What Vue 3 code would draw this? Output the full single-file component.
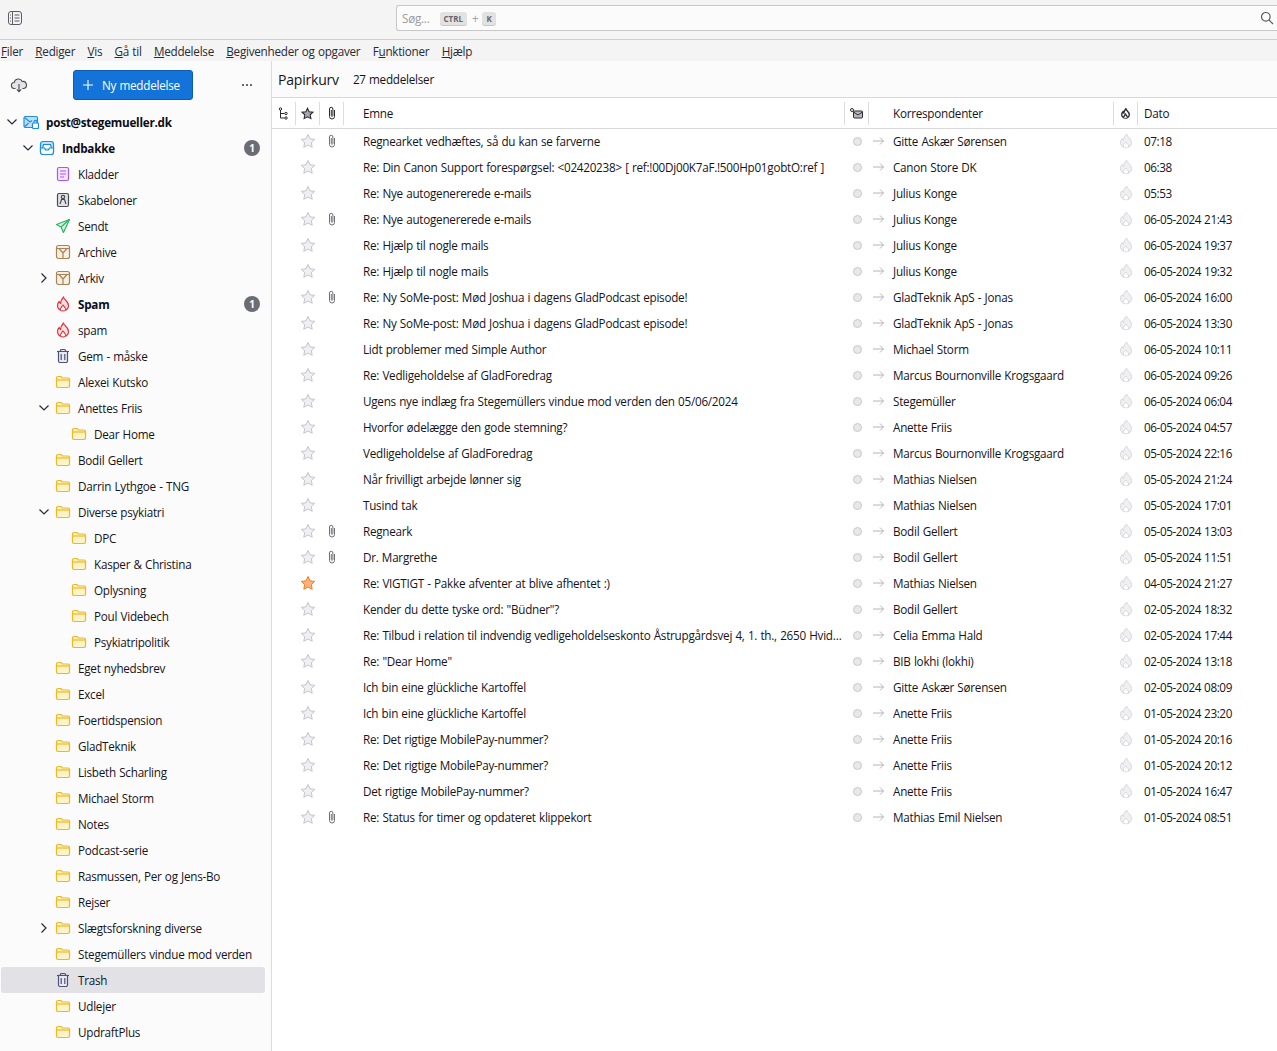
<template>
  <div class="app">
    <div class="toolbar">
      <svg class="pane-btn" width="16" height="16" viewBox="0 0 16 16" fill="none" stroke="#5b5b66" stroke-width="1">
        <rect x="1.5" y="1.5" width="13" height="13" rx="2.5" />
        <path d="M5.5 2v12M3 5h1M3 8h1M3 11h1M7.5 5h5M7.5 8h5M7.5 11h5" />
      </svg>
      <div class="search">
        <span class="search-ph">Søg...</span>
        <span class="kbd">CTRL</span>
        <span class="plus">+</span>
        <span class="kbd">K</span>
        <svg class="search-icon" width="14" height="14" viewBox="0 0 14 14" fill="none" stroke="#5b5b66" stroke-width="1.2">
          <circle cx="5.8" cy="5.8" r="4.3" />
          <path d="M9 9l4 4" />
        </svg>
      </div>
    </div>

    <div class="menubar">
      <span v-for="m in menus" :key="m.label" class="menu-item">{{ m.before }}<u>{{ m.key }}</u>{{ m.after }}</span>
    </div>

    <div class="main">
      <aside class="sidebar">
        <div class="side-head">
          <svg width="18" height="18" viewBox="0 0 18 18" fill="none" stroke="#4a4a4f" stroke-width="1.1">
            <path d="M5.5 12.500H4.600a3 3 0 0 1-.4-6 4.200 4.200 0 0 1 8-1 3.400 3.400 0 0 1 1.400 7h-1.200" fill="#e4e4e8" />
            <path d="M9 8v7.500M6.800 13.400L9 15.600l2.200-2.200" />
          </svg>
          <button class="compose">
            <svg width="10" height="10" viewBox="0 0 10 10" stroke="#fff" stroke-width="1.1"><path d="M5 0v10M0 5h10" /></svg>
            <span>Ny meddelelse</span>
          </button>
          <span class="dots"><i></i><i></i><i></i></span>
        </div>

        <div
          v-for="f in folders"
          :key="f.name + f.level"
          class="folder"
          :class="{ selected: f.selected, bold: f.bold }"
          :style="{ paddingLeft: (f.level * 16 + 5) + 'px' }"
        >
          <span class="twisty">
            <svg v-if="f.open !== undefined" width="12" height="12" viewBox="0 0 12 12" fill="none" stroke="#2b2a33" stroke-width="1.2">
              <path v-if="f.open" d="M1.500 3.500L6 8l4.500-4.500" />
              <path v-else d="M3.500 1.500L8 6l-4.500 4.500" />
            </svg>
          </span>

          <svg class="ficon" width="16" height="16" viewBox="0 0 16 16" fill="none" stroke-width="1.2">
            <template v-if="f.icon === 'folder'">
              <path d="M1.500 4a1.500 1.500 0 0 1 1.500-1.500h3l1.500 1.500H13a1.500 1.500 0 0 1 1.500 1.500V12a1.500 1.500 0 0 1-1.500 1.500H3A1.500 1.500 0 0 1 1.500 12z" fill="#fdf3c9" stroke="#eeb91f" />
              <path d="M1.500 6h13" stroke="#eeb91f" />
            </template>
            <template v-else-if="f.icon === 'account'">
              <rect x="1" y="2.500" width="13.500" height="11" rx="1.500" fill="#bfe0fb" stroke="#1b8ee8" />
              <path d="M1.500 3.500L7 8l2-1.500M1.500 13l4-4" stroke="#1b8ee8" />
              <rect x="9.500" y="9" width="6" height="5.500" rx="1" fill="#fff" stroke="#1b8ee8" />
              <path d="M11 9V7.800a1.500 1.500 0 0 1 3 0V9" stroke="#1b8ee8" />
            </template>
            <template v-else-if="f.icon === 'inbox'">
              <rect x="1.500" y="1.500" width="13" height="13" rx="2.500" fill="#bfe0fb" stroke="#1b8ee8" />
              <path d="M3.500 8l1-3.500h7l1 3.500" stroke="#1b8ee8" fill="#fff" />
              <path d="M1.500 8h4l1 2h3l1-2h4v4a2.500 2.500 0 0 1-2.500 2.500H4A2.500 2.500 0 0 1 1.500 12z" stroke="#1b8ee8" fill="#fff" />
            </template>
            <template v-else-if="f.icon === 'draft'">
              <rect x="2.500" y="1.500" width="11" height="13" rx="1.500" fill="#f3e6fe" stroke="#a855f7" />
              <path d="M5 5h6M5 8h6M5 11h4" stroke="#a855f7" />
            </template>
            <template v-else-if="f.icon === 'template'">
              <rect x="2.500" y="1.500" width="11" height="13" rx="1.500" fill="#e2e2e6" stroke="#4a4a52" />
              <circle cx="8" cy="5" r="1.700" stroke="#4a4a52" />
              <path d="M5 12l1.500-4.500h3L11 12" stroke="#4a4a52" />
            </template>
            <template v-else-if="f.icon === 'sent'">
              <path d="M14.500 1.500L1.500 6.500l4.500 2.500 2.500 5.500z" fill="#d8f5e2" stroke="#2cb163" stroke-linejoin="round" />
              <path d="M14.500 1.500L6 9" stroke="#2cb163" />
            </template>
            <template v-else-if="f.icon === 'archive'">
              <rect x="1.500" y="1.500" width="13" height="13" rx="2" fill="#f6eee0" stroke="#a78458" />
              <path d="M1.500 4.500h13M4 4.500L8 9l4-4.500M8 9v5.500" stroke="#a78458" />
            </template>
            <template v-else-if="f.icon === 'junk'">
              <path :d="flamePath" fill="#fde0e2" stroke="#e5303b" stroke-linejoin="round" />
              <path :d="flameInner" stroke="#e5303b" fill="#fff" />
            </template>
            <template v-else>
              <path d="M2 3.500h12" stroke="#51517a" />
              <path d="M3.500 3.500h9v9.500a1.500 1.500 0 0 1-1.500 1.500H5a1.500 1.500 0 0 1-1.500-1.500z" fill="#e8e8f0" stroke="#51517a" />
              <path d="M5.500 3.500V2.500a1 1 0 0 1 1-1h3a1 1 0 0 1 1 1v1M6.200 6v6M9.800 6v6" stroke="#51517a" />
            </template>
          </svg>

          <span class="fname">{{ f.name }}</span>
          <span v-if="f.badge" class="badge">{{ f.badge }}</span>
        </div>
      </aside>

      <section class="content">
        <div class="msg-head">
          <span class="msg-folder">Papirkurv</span>
          <span class="msg-count">27 meddelelser</span>
        </div>

        <div class="row cols-head">
          <span class="hc sep">
            <svg width="12" height="13" viewBox="0 0 12 13" fill="none" stroke="#2b2a33"><path d="M2.500 3v8h4M2.500 6.500h4" /><circle cx="2.500" cy="2" r="1.200" /><circle cx="8" cy="6.500" r="1.200" /><circle cx="8" cy="11" r="1.200" /></svg>
          </span>
          <span class="hc sep">
            <svg width="13" height="13" viewBox="0 0 16 16" fill="#a8a8ae" stroke="#2b2a33" stroke-width="1.300"><path :d="starPath" /></svg>
          </span>
          <span class="hc sep">
            <svg width="10" height="14" viewBox="0 0 10 14" fill="none" stroke="#2b2a33"><path :d="clipPath" /></svg>
          </span>
          <span class="subject hc-text sep-end">Emne</span>
          <span class="hc sep">
            <svg width="13" height="11" viewBox="0 0 13 11" fill="#b8b8be" stroke="#2b2a33"><rect x="3.500" y="3" width="9" height="7" rx="1" /><path d="M3.500 4l4.500 3 4.500-3" fill="none" /><circle cx="2" cy="2" r="1.500" fill="none" /></svg>
          </span>
          <span class="corr hc-text sep-end">Korrespondenter</span>
          <span class="hc sep">
            <svg width="11" height="11" viewBox="0 0 16 16" fill="#fff" stroke="#2b2a33" stroke-width="2"><path :d="flamePath" /><path :d="flameInner" /></svg>
          </span>
          <span class="date hc-text">Dato</span>
        </div>

        <div class="msg-list">
          <div v-for="(m, i) in messages" :key="i" class="row msg">
            <span class="cell"></span>
            <span class="cell">
              <svg width="16" height="16" viewBox="0 0 16 16" :fill="m.star ? '#ffb27a' : '#f0f0f4'" :stroke="m.star ? '#f07c28' : '#c4c4ca'"><path :d="starPath" /></svg>
            </span>
            <span class="cell">
              <svg v-if="m.clip" width="10" height="14" viewBox="0 0 10 14" fill="none" stroke="#6f6f78"><path :d="clipPath" /></svg>
            </span>
            <span class="subject text">{{ m.subject }}</span>
            <span class="cell">
              <span class="dot"></span>
            </span>
            <span class="corr text with-arrow">
              <svg class="arrow" width="11" height="10" viewBox="0 0 11 10" fill="none" stroke="#b4b4ba"><path d="M0 5h10.500M7 1.500L10.500 5 7 8.500" /></svg>
              {{ m.from }}
            </span>
            <span class="cell">
              <svg width="16" height="16" viewBox="0 0 16 16" fill="#f0f0f3" stroke="#d8d8dd"><path :d="flamePath" /><path :d="flameInner" fill="#fff" /></svg>
            </span>
            <span class="date text">{{ m.date }}</span>
          </div>
        </div>
      </section>
    </div>
  </div>
</template>

<script setup>
const starPath = 'M8 1.500l2 4.300 4.700.6-3.400 3.200.9 4.700L8 12l-4.200 2.300.9-4.700L1.300 6.400 6 5.800z'
const clipPath = 'M7.500 4v6.500a2.500 2.500 0 0 1-5 0V3a1.700 1.700 0 0 1 3.400 0v6.500a.8.8 0 0 1-1.600 0V4'
const flamePath = 'M8.500 1c.4 2.800 5 4.400 5 8.400A5.300 5.300 0 0 1 8 14.800 5.300 5.300 0 0 1 2.500 9.400c0-1.700.8-3 1.700-3.900.2 1 .7 1.700 1.400 2C5.500 5 7 2.800 8.500 1z'
const flameInner = 'M5.500 14.300c-.8-2.100.9-3.300 2.500-5.300 1.600 2 3.300 3.200 2.500 5.300'

const menus = [
  { label: 'Filer', before: '', key: 'F', after: 'iler' },
  { label: 'Rediger', before: '', key: 'R', after: 'ediger' },
  { label: 'Vis', before: '', key: 'V', after: 'is' },
  { label: 'Gå til', before: '', key: 'G', after: 'å til' },
  { label: 'Meddelelse', before: '', key: 'M', after: 'eddelelse' },
  { label: 'Begivenheder', before: '', key: 'B', after: 'egivenheder og opgaver' },
  { label: 'Funktioner', before: 'F', key: 'u', after: 'nktioner' },
  { label: 'Hjælp', before: '', key: 'H', after: 'jælp' }
]

const folders = [
  { name: 'post@stegemueller.dk', level: 0, icon: 'account', open: true, bold: true },
  { name: 'Indbakke', level: 1, icon: 'inbox', open: true, bold: true, badge: 1 },
  { name: 'Kladder', level: 2, icon: 'draft' },
  { name: 'Skabeloner', level: 2, icon: 'template' },
  { name: 'Sendt', level: 2, icon: 'sent' },
  { name: 'Archive', level: 2, icon: 'archive' },
  { name: 'Arkiv', level: 2, icon: 'archive', open: false },
  { name: 'Spam', level: 2, icon: 'junk', bold: true, badge: 1 },
  { name: 'spam', level: 2, icon: 'junk' },
  { name: 'Gem - måske', level: 2, icon: 'trash' },
  { name: 'Alexei Kutsko', level: 2, icon: 'folder' },
  { name: 'Anettes Friis', level: 2, icon: 'folder', open: true },
  { name: 'Dear Home', level: 3, icon: 'folder' },
  { name: 'Bodil Gellert', level: 2, icon: 'folder' },
  { name: 'Darrin Lythgoe - TNG', level: 2, icon: 'folder' },
  { name: 'Diverse psykiatri', level: 2, icon: 'folder', open: true },
  { name: 'DPC', level: 3, icon: 'folder' },
  { name: 'Kasper & Christina', level: 3, icon: 'folder' },
  { name: 'Oplysning', level: 3, icon: 'folder' },
  { name: 'Poul Videbech', level: 3, icon: 'folder' },
  { name: 'Psykiatripolitik', level: 3, icon: 'folder' },
  { name: 'Eget nyhedsbrev', level: 2, icon: 'folder' },
  { name: 'Excel', level: 2, icon: 'folder' },
  { name: 'Foertidspension', level: 2, icon: 'folder' },
  { name: 'GladTeknik', level: 2, icon: 'folder' },
  { name: 'Lisbeth Scharling', level: 2, icon: 'folder' },
  { name: 'Michael Storm', level: 2, icon: 'folder' },
  { name: 'Notes', level: 2, icon: 'folder' },
  { name: 'Podcast-serie', level: 2, icon: 'folder' },
  { name: 'Rasmussen, Per og Jens-Bo', level: 2, icon: 'folder' },
  { name: 'Rejser', level: 2, icon: 'folder' },
  { name: 'Slægtsforskning diverse', level: 2, icon: 'folder', open: false },
  { name: 'Stegemüllers vindue mod verden', level: 2, icon: 'folder' },
  { name: 'Trash', level: 2, icon: 'trash', selected: true },
  { name: 'Udlejer', level: 2, icon: 'folder' },
  { name: 'UpdraftPlus', level: 2, icon: 'folder' }
]

const messages = [
  { subject: 'Regnearket vedhæftes, så du kan se farverne', from: 'Gitte Askær Sørensen', date: '07:18', clip: true },
  { subject: 'Re: Din Canon Support forespørgsel: <02420238> [ ref:!00Dj00K7aF.!500Hp01gobtO:ref ]', from: 'Canon Store DK', date: '06:38' },
  { subject: 'Re: Nye autogenererede e-mails', from: 'Julius Konge', date: '05:53' },
  { subject: 'Re: Nye autogenererede e-mails', from: 'Julius Konge', date: '06-05-2024 21:43', clip: true },
  { subject: 'Re: Hjælp til nogle mails', from: 'Julius Konge', date: '06-05-2024 19:37' },
  { subject: 'Re: Hjælp til nogle mails', from: 'Julius Konge', date: '06-05-2024 19:32' },
  { subject: 'Re: Ny SoMe-post: Mød Joshua i dagens GladPodcast episode!', from: 'GladTeknik ApS - Jonas', date: '06-05-2024 16:00', clip: true },
  { subject: 'Re: Ny SoMe-post: Mød Joshua i dagens GladPodcast episode!', from: 'GladTeknik ApS - Jonas', date: '06-05-2024 13:30' },
  { subject: 'Lidt problemer med Simple Author', from: 'Michael Storm', date: '06-05-2024 10:11' },
  { subject: 'Re: Vedligeholdelse af GladForedrag', from: 'Marcus Bournonville Krogsgaard', date: '06-05-2024 09:26' },
  { subject: 'Ugens nye indlæg fra Stegemüllers vindue mod verden den 05/06/2024', from: 'Stegemüller', date: '06-05-2024 06:04' },
  { subject: 'Hvorfor ødelægge den gode stemning?', from: 'Anette Friis', date: '06-05-2024 04:57' },
  { subject: 'Vedligeholdelse af GladForedrag', from: 'Marcus Bournonville Krogsgaard', date: '05-05-2024 22:16' },
  { subject: 'Når frivilligt arbejde lønner sig', from: 'Mathias Nielsen', date: '05-05-2024 21:24' },
  { subject: 'Tusind tak', from: 'Mathias Nielsen', date: '05-05-2024 17:01' },
  { subject: 'Regneark', from: 'Bodil Gellert', date: '05-05-2024 13:03', clip: true },
  { subject: 'Dr. Margrethe', from: 'Bodil Gellert', date: '05-05-2024 11:51', clip: true },
  { subject: 'Re: VIGTIGT - Pakke afventer at blive afhentet :)', from: 'Mathias Nielsen', date: '04-05-2024 21:27', star: true },
  { subject: 'Kender du dette tyske ord: "Büdner"?', from: 'Bodil Gellert', date: '02-05-2024 18:32' },
  { subject: 'Re: Tilbud i relation til indvendig vedligeholdelseskonto Åstrupgårdsvej 4, 1. th., 2650 Hvidovre', from: 'Celia Emma Hald', date: '02-05-2024 17:44' },
  { subject: 'Re: "Dear Home"', from: 'BIB lokhi (lokhi)', date: '02-05-2024 13:18' },
  { subject: 'Ich bin eine glückliche Kartoffel', from: 'Gitte Askær Sørensen', date: '02-05-2024 08:09' },
  { subject: 'Ich bin eine glückliche Kartoffel', from: 'Anette Friis', date: '01-05-2024 23:20' },
  { subject: 'Re: Det rigtige MobilePay-nummer?', from: 'Anette Friis', date: '01-05-2024 20:16' },
  { subject: 'Re: Det rigtige MobilePay-nummer?', from: 'Anette Friis', date: '01-05-2024 20:12' },
  { subject: 'Det rigtige MobilePay-nummer?', from: 'Anette Friis', date: '01-05-2024 16:47' },
  { subject: 'Re: Status for timer og opdateret klippekort', from: 'Mathias Emil Nielsen', date: '01-05-2024 08:51', clip: true }
]
</script>

<style>
html, body {
  margin: 0;
  overflow: hidden;
}
</style>

<style scoped>
.app {
  width: 1277px;
  height: 1051px;
  overflow: hidden;
  display: flex;
  flex-direction: column;
  font-family: "Open Sans", "Noto Sans", sans-serif;
  font-size: 11.7px;
  letter-spacing: -0.25px;
  word-spacing: 0.5px;
  color: #15141a;
  background: #fff;
}

.toolbar {
  height: 40px;
  box-sizing: border-box;
  background: #f4f4f4;
  border-bottom: 1px solid #cfcfcf;
  display: flex;
  align-items: center;
  padding: 0 0 3px 7px;
}

.pane-btn {
  flex: none;
}

.search {
  margin-left: 373px;
  flex: 1;
  height: 26px;
  box-sizing: border-box;
  background: #fbfbfb;
  border: 1px solid #c8c8c8;
  border-right: 0;
  border-radius: 3px 0 0 3px;
  display: flex;
  align-items: center;
  padding-left: 5px;
  position: relative;
}

.search-ph {
  color: #9a9aa0;
  margin-right: 10px;
}

.kbd {
  background: #e2e2e2;
  color: #66666c;
  font-size: 8px;
  font-weight: 700;
  letter-spacing: 0;
  border-radius: 3px;
  padding: 1px 4px;
  box-shadow: 0 1px 0 #c8c8c8;
}

.plus {
  color: #a0a0a6;
  margin: 0 4px 0 5px;
}

.search-icon {
  position: absolute;
  right: 3px;
  top: 5px;
}

.menubar {
  height: 21px;
  box-sizing: border-box;
  flex: none;
  background: #f4f4f4;
  display: flex;
  align-items: center;
  gap: 12.3px;
  padding: 1px 0 0 1px;
  color: #2b2a33;
}

.main {
  flex: 1;
  display: flex;
  min-height: 0;
}

.sidebar {
  width: 272px;
  flex: none;
  box-sizing: border-box;
  background: #fbfbfb;
  border-right: 1px solid #dcdcdc;
  overflow: hidden;
}

.side-head {
  height: 48px;
  display: flex;
  align-items: center;
  padding: 0 19px 0 10px;
  box-sizing: border-box;
}

.compose {
  margin-left: 45px;
  width: 120px;
  height: 30px;
  background: #1373d9;
  border: 1px solid #0c5cb0;
  border-radius: 3px;
  color: #fff;
  font: inherit;
  letter-spacing: inherit;
  word-spacing: inherit;
  display: flex;
  align-items: center;
  padding: 0 0 0 9px;
  gap: 9px;
}

.dots {
  margin-left: auto;
  display: flex;
  gap: 2px;
}

.dots i {
  width: 2px;
  height: 2px;
  background: #3a3a42;
  border-radius: 50%;
}

.folder {
  height: 26px;
  display: flex;
  align-items: center;
  margin-right: 6px;
  margin-left: 1px;
  box-sizing: border-box;
  border-radius: 3px;
  position: relative;
  white-space: nowrap;
}

.folder.selected {
  background: #e2e2e6;
}

.folder.bold .fname {
  font-weight: 700;
  color: #0c0c14;
}

.twisty {
  width: 17px;
  display: flex;
  flex: none;
}

.ficon {
  flex: none;
}

.fname {
  margin-left: 7px;
}

.badge {
  position: absolute;
  right: 5px;
  width: 16px;
  height: 16px;
  border-radius: 50%;
  background: #6c6c75;
  color: #fff;
  font-size: 10px;
  font-weight: 700;
  display: flex;
  align-items: center;
  justify-content: center;
}

.content {
  flex: 1;
  min-width: 0;
}

.msg-head {
  height: 37px;
  box-sizing: border-box;
  border-bottom: 1px solid #d8d8d8;
  background: #fbfbfb;
  display: flex;
  align-items: center;
  padding: 0 0 0 6px;
  gap: 14px;
}

.msg-folder {
  font-size: 14px;
  letter-spacing: -0.2px;
  font-weight: 500;
}

.row {
  display: grid;
  grid-template-columns: 24px 24px 24px 501px 24px 245px 24px 1fr;
  align-items: center;
  height: 26px;
}

.cols-head {
  height: 31px;
  border-bottom: 1px solid #d8d8d8;
  box-sizing: border-box;
}

.msg-list {
  margin-top: -1px;
}

.hc {
  display: flex;
  align-items: center;
  justify-content: center;
  height: 23px;
  border-right: 1px solid #dcdcdc;
}

.hc-text {
  padding-left: 19px;
  box-sizing: border-box;
  height: 23px;
  display: flex;
  align-items: center;
}

.sep-end {
  border-right: 1px solid #dcdcdc;
}

.cols-head .corr {
  padding-left: 24px;
}

.cols-head .date {
  padding-left: 6px;
}

.cell {
  display: flex;
  align-items: center;
  justify-content: center;
}

.text {
  white-space: nowrap;
  overflow: hidden;
  text-overflow: ellipsis;
}

.msg .subject {
  padding-left: 19px;
}

.msg .corr {
  padding-left: 24px;
  position: relative;
}

.arrow {
  position: absolute;
  left: 4px;
  top: 3px;
}

.msg .date {
  padding-left: 6px;
  letter-spacing: -0.4px;
}

.dot {
  width: 7px;
  height: 7px;
  border-radius: 50%;
  background: #e8e8ea;
  border: 1px solid #c8c8cc;
}
</style>
